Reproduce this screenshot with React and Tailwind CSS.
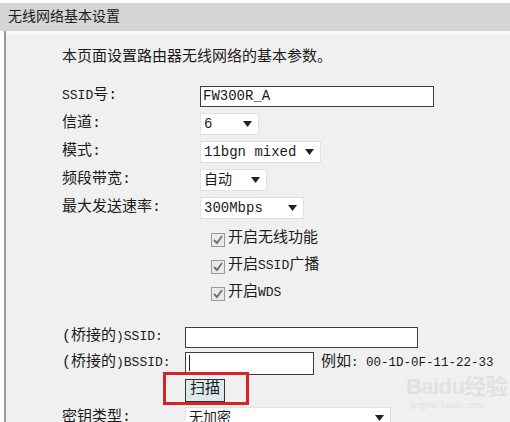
import React from 'react';

const mono = { fontFamily: '"Liberation Mono", "Noto Sans CJK SC", monospace' };

// Latin parts of labels are narrower than the CJK glyphs in the original
const L = ({ children, size = 'text-[13px]' }) => <span className={size}>{children}</span>;

const Select = ({ value, width }) => (
    <div className={`${width} h-[22px] bg-white border border-[#e2e2e2] flex items-center justify-between pl-[3px] pr-[6px] text-[14px] whitespace-nowrap`}>
        <span>{value}</span>
        <svg width="9" height="6" viewBox="0 0 9 6"><path d="M0 0 L9 0 L4.5 6 Z" fill="#222" /></svg>
    </div>
);

const Check = ({ children }) => (
    <div className="h-[27px] flex items-center pl-[205px] gap-[3px]">
        <svg width="14" height="14" viewBox="0 0 14 14">
            <rect x="0.5" y="0.5" width="13" height="13" fill="#e9e9e9" stroke="#9a9a9a" />
            <path d="M3 7 L6 10 L11 3" fill="none" stroke="#6e6e6e" strokeWidth="1.8" />
        </svg>
        <span className="text-[15px] whitespace-nowrap">{children}</span>
    </div>
);

const Row = ({ label, labelWidth, children, height = 'h-[28px]' }) => (
    <div className={`${height} flex items-center`}>
        <div className={`${labelWidth} text-[15px] whitespace-nowrap`}>{label}</div>
        {children}
    </div>
);

const App = () => {
    return (
        <div className="w-[510px] h-[422px] bg-white overflow-hidden relative text-[#1b1b1b]" style={mono}>
            <div className="h-[3px] bg-white" />
            <div className="h-[28px] bg-[#d5d5d5] flex items-center pl-[8px] text-[14px]">无线网络基本设置</div>

            <div className="ml-[4px] h-[400px] border-l-2 border-[#a0968f] bg-[#f0f0f0] pl-[56px]">
                <div className="h-[4px] -ml-[56px] bg-[#f8f8f8]" />
                <div className="h-[20px] mt-[13px] flex items-center text-[15px]">本页面设置路由器无线网络的基本参数。</div>

                <div className="mt-[14px]">
                    <Row label={<><L>SSID</L>号:</>} labelWidth="w-[138px]">
                        <div className="w-[234px] h-[21px] bg-white border-[1.5px] border-[#3e3e3e] flex items-center pl-[2px] text-[14px]">FW300R_A</div>
                    </Row>
                    <Row label="信道:" labelWidth="w-[138px]">
                        <Select value="6" width="w-[59px]" />
                    </Row>
                    <Row label="模式:" labelWidth="w-[138px]">
                        <Select value="11bgn mixed" width="w-[121px]" />
                    </Row>
                    <Row label="频段带宽:" labelWidth="w-[138px]">
                        <Select value="自动" width="w-[67px]" />
                    </Row>
                    <Row label="最大发送速率:" labelWidth="w-[138px]">
                        <Select value="300Mbps" width="w-[104px]" />
                    </Row>
                </div>

                <div className="mt-[4px] -ml-[56px]">
                    <Check>开启无线功能</Check>
                    <Check>开启<L>SSID</L>广播</Check>
                    <Check>开启<L>WDS</L></Check>
                </div>

                <div className="mt-[17px]">
                    <Row label={<>(桥接的<L>)SSID:</L></>} labelWidth="w-[123px]" height="h-[26px]">
                        <div className="w-[233px] h-[21px] bg-white border-[1.5px] border-[#3e3e3e]" />
                    </Row>
                    <Row label={<>(桥接的<L>)BSSID:</L></>} labelWidth="w-[123px]" height="h-[26px]">
                        <div className="w-[129px] h-[23px] bg-white border-[1.5px] border-[#3e3e3e] flex items-center pl-[3px]">
                            <div className="w-px h-[16px] bg-[#222]" />
                        </div>
                        <span className="ml-[7px] text-[15px] whitespace-nowrap">例如<L size="text-[12.5px]">: 00-1D-0F-11-22-33</L></span>
                    </Row>
                    <div className="h-[29px] flex items-center pl-[123px] relative">
                        <div className="h-[23px] px-[4px] bg-[#dbe8ec] border border-[#333] flex items-center text-[15px]">扫描</div>
                        <div className="absolute left-[101px] top-[-4px] w-[86px] h-[33px] border-[3px] border-[#d8232a]" />
                    </div>
                    <Row label="密钥类型:" labelWidth="w-[123px]" height="h-[26px]">
                        <Select value="无加密" width="w-[206px]" />
                    </Row>
                </div>
            </div>

            <div className="absolute left-[406px] top-[376px] text-[#e1e1e1] leading-none whitespace-nowrap" style={{ fontFamily: '"Liberation Sans", "Noto Sans CJK SC", sans-serif' }}>
                <div className="text-[22px] font-bold tracking-tight">Baidu经验</div>
                <div className="text-[9px] mt-[3px] pl-[4px]">jingyan.baidu.com</div>
            </div>
        </div>
    );
};

export default App;
